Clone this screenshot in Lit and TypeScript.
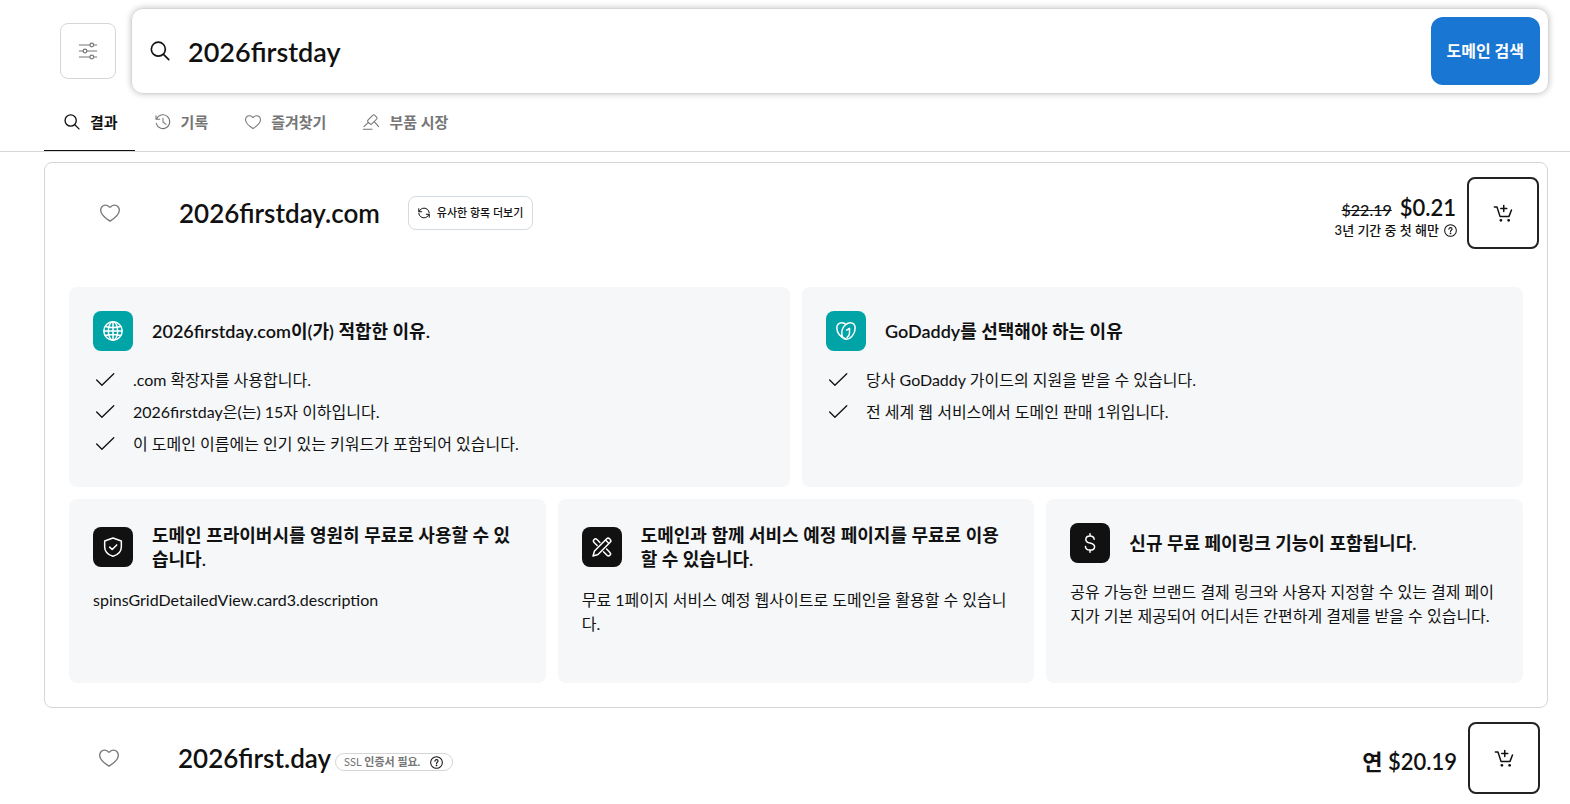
import { LitElement, html, css, svg, TemplateResult } from "lit";
import { customElement, property, state } from "lit/decorators.js";
import { classMap } from "lit/directives/class-map.js";

const icons: Record<string, TemplateResult> = {
  search: svg`<circle cx="10" cy="9.800" r="8.400"/><path d="M16.200 16l6.300 6.300"/>`,
  sliders: svg`<path d="M.5 4h14M19.500 4h4M.5 12h5M10.500 12h13M.5 20h14M19.500 20h4"/><circle cx="17" cy="4" r="2.500"/><circle cx="8" cy="12" r="2.500"/><circle cx="17" cy="20" r="2.500"/>`,
  heart: svg`<path d="M12 21.800C8.500 19.600 1.200 14.800 .8 9C.6 5.400 3.300 2.600 6.500 2.600C8.300 2.600 9.900 3.300 11 4.500C11.600 5.100 12.400 5.100 13 4.500C14.100 3.300 15.700 2.600 17.500 2.600C20.700 2.600 23.400 5.400 23.200 9C22.800 14.800 15.500 19.600 12 21.800Z"/>`,
  history: svg`<path d="M1.500 2.500V8H7M2.200 7.800A10.300 10.300 0 1 1 1.800 14M12 6.500V12l4.500 3.500"/>`,
  gavel: svg`<path d="M.5 23h13M7.400 9.200l7.400-7.500a1.800 1.800 0 0 1 2.500 0l3.300 3.300a1.800 1.800 0 0 1 0 2.500l-7.400 7.400a1.800 1.800 0 0 1-2.500 0l-3.300-3.200a1.800 1.800 0 0 1 0-2.500zM8.300 12.300L1.500 18.800M16.800 11.400l6.700 7.600"/>`,
  refresh: svg`<path d="M1.500 3.500V9.500H7.500M2 9a10.500 10.500 0 0 1 16.500-4.500A10.500 10.500 0 0 1 22.500 12M22.500 20.500V14.500H16.500M22 15A10.500 10.500 0 0 1 5.500 19.500A10.500 10.500 0 0 1 1.500 12.500"/>`,
  help: svg`<circle cx="12" cy="12" r="10.800"/><path d="M9 9.600c0-1.700 1.300-2.900 3-2.900s3 1.100 3 2.700c0 2.200-3 2.200-3 4.600"/><circle cx="12" cy="17.200" r=".7" fill="currentColor"/>`,
  cart: svg`<path d="M.5 4H4L8 16.500H20L23.300 8M13 2v8M9 6h8"/><circle cx="9.200" cy="21.800" r=".9" fill="currentColor"/><circle cx="19.500" cy="21.800" r=".9" fill="currentColor"/>`,
  check: svg`<path d="M2 12L8.300 18.300L22.500 4.500"/>`,
  globe: svg`<circle cx="12" cy="12" r="11"/><ellipse cx="12" cy="12" rx="5.600" ry="11"/><path d="M1 12h22M12 1v22M3 6.500c5 1.600 13 1.600 18 0M3 17.500c5-1.600 13-1.600 18 0"/>`,
  heartLogo: svg`<path d="M11.200 21.400C5 19.500 1 14 1 8.400C1 4.500 3.600 2 7 2C9.100 2 10.700 2.800 12 4.200C8.800 6.600 6.900 10.500 6.900 14.500C6.900 18.700 9 21.800 12.300 21.800C18 21.800 23 14.900 23 8.400C23 4.500 20.500 2 17.100 2C15 2 13.300 2.800 12 4.200M12.800 11L16.200 8.800V14.500C16.200 17 15 18.600 13.200 19.800"/>`,
  shield: svg`<path d="M12 1.200L22 4.800V12C22 17.500 18 21.300 12 23.200C6 21.300 2 17.500 2 12V4.800ZM8 12.200L11 15L16.500 9.500"/>`,
  tools: svg`<path d="M1.200 22.800L3 16.800L17.600 2.200a2.500 2.500 0 0 1 3.500 0l.7.700a2.500 2.500 0 0 1 0 3.500L7.200 21ZM16.300 3.700l4 4M9.500 6.500L6 3a2.500 2.500 0 0 0-3.500 0a2.500 2.500 0 0 0 0 3.500L6.200 10.200M17.500 14.500L21.500 18.500a2.500 2.500 0 0 1 0 3.500a2.500 2.500 0 0 1-3.500 0L13.800 17.800"/>`,
  dollar: svg`<path d="M17 7.500C16.800 5 14.800 3.500 12 3.500S7 5.200 7 7.700S8.700 11.300 12 12S17.500 13.700 17.500 16.400S15.200 20.500 12 20.500S6.700 18.800 6.500 16.200M12 1v2.500M12 20.500v2.500"/>`,
};

@customElement("ui-icon")
class UiIcon extends LitElement {
  @property() name = "";
  static styles = css`
    :host { display: inline-flex; flex: none; width: 20px; height: 20px; }
    svg {
      width: 100%; height: 100%; overflow: visible; fill: none;
      stroke: currentColor; stroke-width: var(--stroke, 1.6);
      stroke-linecap: round; stroke-linejoin: round;
    }
  `;
  render() {
    return html`<svg viewBox="0 0 24 24" aria-hidden="true">${icons[this.name]}</svg>`;
  }
}

const tabs = [
  { icon: "search", label: "결과" },
  { icon: "history", label: "기록" },
  { icon: "heart", label: "즐겨찾기" },
  { icon: "gavel", label: "부품 시장" },
];

const reasons = [
  {
    icon: "globe",
    title: "2026firstday.com이(가) 적합한 이유.",
    items: [
      ".com 확장자를 사용합니다.",
      "2026firstday은(는) 15자 이하입니다.",
      "이 도메인 이름에는 인기 있는 키워드가 포함되어 있습니다.",
    ],
  },
  {
    icon: "heartLogo",
    title: "GoDaddy를 선택해야 하는 이유",
    items: [
      "당사 GoDaddy 가이드의 지원을 받을 수 있습니다.",
      "전 세계 웹 서비스에서 도메인 판매 1위입니다.",
    ],
  },
];

const extras = [
  {
    icon: "shield",
    title: "도메인 프라이버시를 영원히 무료로 사용할 수 있습니다.",
    text: "spinsGridDetailedView.card3.description",
  },
  {
    icon: "tools",
    title: "도메인과 함께 서비스 예정 페이지를 무료로 이용할 수 있습니다.",
    text: "무료 1페이지 서비스 예정 웹사이트로 도메인을 활용할 수 있습니다.",
  },
  {
    icon: "dollar",
    title: "신규 무료 페이링크 기능이 포함됩니다.",
    text: "공유 가능한 브랜드 결제 링크와 사용자 지정할 수 있는 결제 페이지가 기본 제공되어 어디서든 간편하게 결제를 받을 수 있습니다.",
  },
];

@customElement("app-root")
class AppRoot extends LitElement {
  @state() private activeTab = 0;

  static styles = css`
    :host {
      display: block; color: #111; background: #fff;
      font: 16px/24px Lato, "Noto Sans CJK KR", sans-serif;
    }
    * { box-sizing: border-box; }
    button, input { font: inherit; color: inherit; }
    button { cursor: pointer; padding: 0; background: none; border: 0; }
    h2, h3, p, ul { margin: 0; padding: 0; }
    .top { display: flex; align-items: center; gap: 15px; padding: 8px 21px 0 60px; }
    .filter {
      display: grid; place-items: center; flex: none; width: 56px; height: 56px;
      color: #767676; border: 1px solid #d6d6d6; border-radius: 8px;
    }
    .filter ui-icon { width: 18px; height: 18px; }
    .search {
      display: flex; align-items: center; flex: 1; min-width: 0; height: 86px;
      padding: 0 8px 0 18px; border: 1px solid #d6d6d6; border-radius: 12px;
      box-shadow: 0 0 6px rgba(0, 0, 0, 0.24);
    }
    .search ui-icon { --stroke: 2; }
    .query {
      flex: 1; min-width: 0; height: 56px; padding: 0 18px; border: 0; outline: 0;
      background: none; font-size: 27px; font-weight: 600;
    }
    .submit {
      flex: none; height: 68px; padding: 0 16px; border-radius: 12px;
      background: #1976d2; color: #fff; font-weight: 700;
    }
    .tabs { display: flex; padding: 0 44px; border-bottom: 1px solid #d6d6d6; }
    .tab {
      display: flex; align-items: center; gap: 10px; height: 57px; padding: 0 17px 0 20px;
      color: #767676; font-size: 15px; font-weight: 600; border-bottom: 1px solid transparent;
    }
    .tab ui-icon { width: 16px; height: 16px; }
    .tab.active { color: #111; border-bottom-color: #111; font-weight: 700; }
    .tab.active ui-icon { --stroke: 2; }
    .list { padding: 10px 22px 0 44px; }
    .result { border: 1px solid #d6d6d6; border-radius: 8px; }
    .row { display: flex; align-items: center; padding: 14px 8px 0 55px; }
    .fav { display: flex; margin-right: 59px; color: #767676; }
    .name { font-size: 26px; line-height: 34px; font-weight: 600; }
    .similar {
      display: flex; align-items: center; gap: 7px; height: 34px; margin-left: 28px; padding: 0 9px;
      border: 1px solid #d4dbe0; border-radius: 8px; font-size: 11px; font-weight: 500;
    }
    .similar ui-icon { width: 12px; height: 12px; --stroke: 2; }
    .tag {
      display: flex; align-items: center; gap: 10px; height: 18px; margin: 8px 0 0 4px; padding: 0 9px 0 8px;
      border: 1px solid #d6d6d6; border-radius: 9px; color: #767676;
      font-size: 11px; line-height: 16px; font-weight: 700;
    }
    .light { font-weight: 400; }
    .price { margin-left: auto; margin-right: 10px; padding-top: 8px; text-align: right; }
    .amounts { display: flex; align-items: baseline; justify-content: flex-end; gap: 8px; padding-right: 1px; }
    .old { font-weight: 500; }
    .now { font-size: 22px; line-height: 24px; font-weight: 600; }
    .term {
      display: flex; align-items: center; justify-content: flex-end; gap: 5px;
      font-size: 13px; line-height: 16px; font-weight: 500;
    }
    .help { display: flex; color: #111; }
    .help ui-icon { width: 13px; height: 13px; --stroke: 1.9; }
    .cart {
      display: grid; place-items: center; flex: none; width: 72px; height: 72px;
      border: 2px solid #222; border-radius: 8px;
    }
    .cart ui-icon { width: 18px; height: 18px; --stroke: 2; }
    .panels { display: grid; gap: 12px; padding: 38px 24px 24px; }
    .two { display: grid; grid-template-columns: repeat(2, 1fr); gap: 12px; }
    .three { display: grid; grid-template-columns: repeat(3, 1fr); gap: 12px; }
    .panel { padding: 24px 24px 28px; border-radius: 8px; background: #f5f7f9; }
    .three .panel { padding-bottom: 47px; }
    .head { display: flex; align-items: center; gap: 19px; }
    .badge {
      display: grid; place-items: center; flex: none; width: 40px; height: 40px;
      border-radius: 8px; background: #111; color: #fff;
    }
    .two .badge { background: #00a4a6; }
    .badge ui-icon { --stroke: 1.8; }
    .title { font-size: 18px; line-height: 24px; font-weight: 600; }
    .checks { display: grid; gap: 8px; list-style: none; margin: 17px 0 3px; }
    .check { display: flex; align-items: center; gap: 18px; padding-left: 2px; }
    .desc { margin-top: 17px; }
  `;

  private cartButton(domain: string) {
    return html`<button class="cart" aria-label="${domain} 장바구니에 추가"><ui-icon name="cart"></ui-icon></button>`;
  }

  render() {
    return html`
      <form class="top" @submit=${(e: Event) => e.preventDefault()}>
        <button class="filter" type="button" aria-label="필터"><ui-icon name="sliders"></ui-icon></button>
        <div class="search">
          <ui-icon name="search"></ui-icon>
          <input class="query" type="text" aria-label="도메인 검색" .value=${"2026firstday"} />
          <button class="submit" type="submit">도메인 검색</button>
        </div>
      </form>
      <nav class="tabs">
        ${tabs.map(
          (t, i) => html`<button
            class=${classMap({ tab: true, active: i === this.activeTab })}
            @click=${() => (this.activeTab = i)}
          ><ui-icon name=${t.icon}></ui-icon>${t.label}</button>`
        )}
      </nav>
      <main class="list">
        <section class="result">
          <div class="row">
            <button class="fav" aria-label="즐겨찾기"><ui-icon name="heart"></ui-icon></button>
            <h2 class="name">2026firstday.com</h2>
            <button class="similar"><ui-icon name="refresh"></ui-icon>유사한 항목 더보기</button>
            <div class="price">
              <div class="amounts"><s class="old">$22.19</s><span class="now">$0.21</span></div>
              <div class="term">3년 기간 중 첫 해만
                <button class="help" aria-label="도움말"><ui-icon name="help"></ui-icon></button>
              </div>
            </div>
            ${this.cartButton("2026firstday.com")}
          </div>
          <div class="panels">
            <div class="two">
              ${reasons.map(
                (r) => html`<article class="panel">
                  <div class="head"><span class="badge"><ui-icon name=${r.icon}></ui-icon></span><h3 class="title">${r.title}</h3></div>
                  <ul class="checks">
                    ${r.items.map((x) => html`<li class="check"><ui-icon name="check"></ui-icon><span>${x}</span></li>`)}
                  </ul>
                </article>`
              )}
            </div>
            <div class="three">
              ${extras.map(
                (c) => html`<article class="panel">
                  <div class="head"><span class="badge"><ui-icon name=${c.icon}></ui-icon></span><h3 class="title">${c.title}</h3></div>
                  <p class="desc">${c.text}</p>
                </article>`
              )}
            </div>
          </div>
        </section>
        <section class="row">
          <button class="fav" aria-label="즐겨찾기"><ui-icon name="heart"></ui-icon></button>
          <h2 class="name">2026first.day</h2>
          <div class="tag">
            <span><span class="light">SSL</span> 인증서 필요.</span>
            <button class="help" aria-label="도움말"><ui-icon name="help"></ui-icon></button>
          </div>
          <div class="price">
            <div class="amounts"><span class="now">연 $20.19</span></div>
          </div>
          ${this.cartButton("2026first.day")}
        </section>
      </main>
    `;
  }
}
